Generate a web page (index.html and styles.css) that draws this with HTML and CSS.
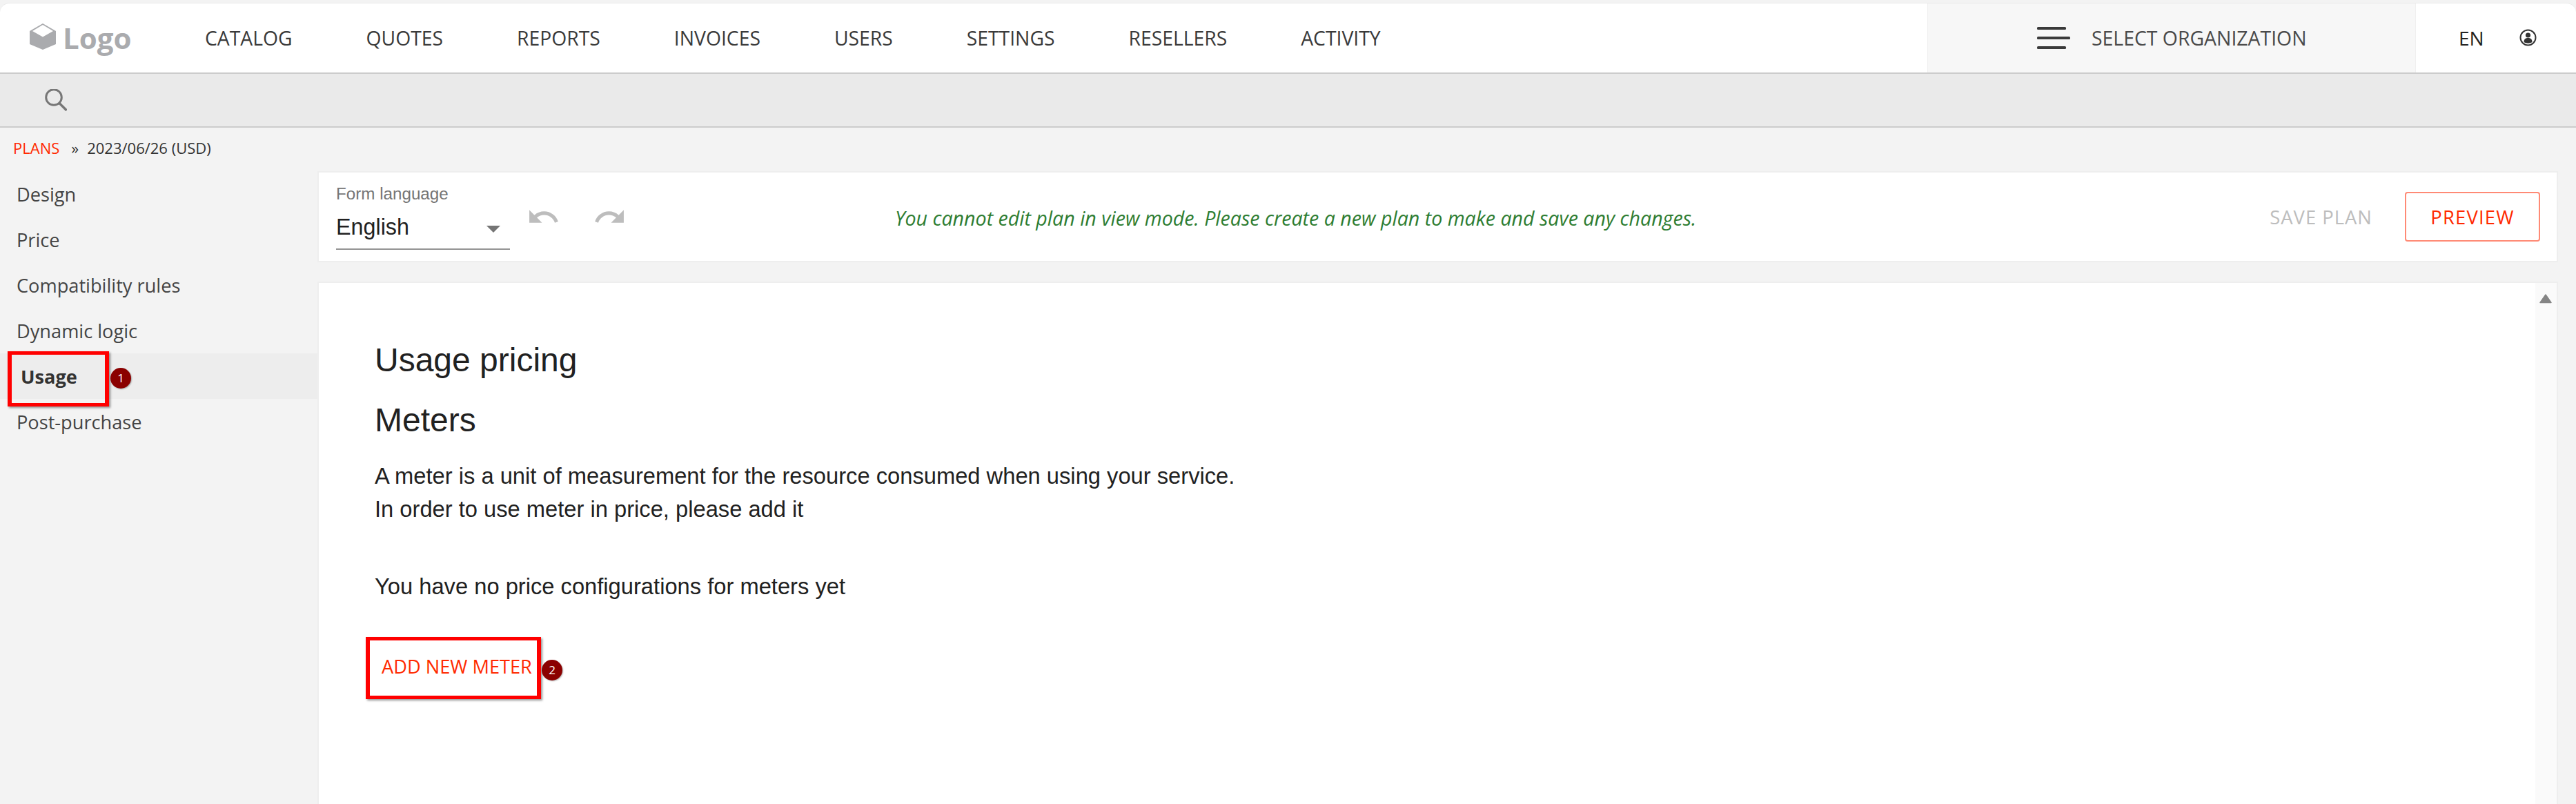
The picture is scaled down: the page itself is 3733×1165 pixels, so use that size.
FILE: index.html
```html
<!DOCTYPE html>
<html lang="en">
<head>
<meta charset="utf-8">
<title>Usage pricing</title>
<link rel="stylesheet" href="styles.css">
</head>
<body>
<header class="topbar">
  <div class="logo">
    <svg class="logo-cube" viewBox="0 0 38 38" aria-hidden="true"><path fill="#aaabae" d="M19 0 38 11v19L19 38 0 30V11z"/><path fill="#fff" d="M19 2 34 11 19 19.500 4 11z"/></svg>
    <span class="logo-text">Logo</span>
  </div>
  <nav class="main-nav">
    <a>CATALOG</a><a>QUOTES</a><a>REPORTS</a><a>INVOICES</a><a>USERS</a><a>SETTINGS</a><a>RESELLERS</a><a>ACTIVITY</a>
  </nav>
  <div class="org">
    <svg class="burger" viewBox="0 0 48 32" aria-hidden="true"><rect width="42" height="4" rx="1.500" fill="#3a3a3a"/><rect y="14" width="48" height="4" rx="1.500" fill="#3a3a3a"/><rect y="28" width="42" height="4" rx="1.500" fill="#3a3a3a"/></svg>
    <span>SELECT ORGANIZATION</span>
  </div>
  <div class="account">
    <span class="lang">EN</span>
    <svg class="user" viewBox="0 0 25 25" aria-hidden="true"><circle cx="12.500" cy="12.500" r="11" fill="none" stroke="#333" stroke-width="2"/><circle cx="12.500" cy="9" r="3.600" fill="#333"/><path fill="#333" d="M6.500 19c0-4.500 2.500-6 6-6s6 1.500 6 6c-3.500 2.200-8.500 2.200-12 0z"/></svg>
  </div>
</header>
<div class="searchbar">
  <svg class="search-icon" viewBox="0 0 32 32" aria-hidden="true"><circle cx="13" cy="12" r="11.300" fill="none" stroke="#777" stroke-width="3"/><path d="M21 20.500 31.500 31" stroke="#777" stroke-width="3.400" fill="none"/></svg>
</div>
<div class="breadcrumb"><a class="crumb-link">PLANS</a><span class="crumb-sep">»</span><span>2023/06/26 (USD)</span></div>
<main class="layout">
  <aside class="side">
    <a class="side-item">Design</a>
    <a class="side-item">Price</a>
    <a class="side-item">Compatibility rules</a>
    <a class="side-item">Dynamic logic</a>
    <a class="side-item side-active"><span>Usage</span><i class="mark mark-usage"></i><b class="badge badge-one">1</b></a>
    <a class="side-item">Post-purchase</a>
  </aside>
  <section class="work">
    <div class="card toolbar">
      <div class="lang-field">
        <label class="field-label">Form language</label>
        <div class="select"><span>English</span><i class="caret"></i></div>
      </div>
      <div class="history">
        <svg class="hist-icon" viewBox="0 0 24 24" aria-hidden="true"><path d="M12.500 8c-2.650 0-5.050.99-6.900 2.600L2 7v9h9l-3.620-3.620c1.390-1.160 3.160-1.880 5.120-1.880 3.540 0 6.550 2.310 7.600 5.500l2.370-.78C21.080 11.030 17.150 8 12.500 8z"/></svg>
        <svg class="hist-icon" viewBox="0 0 24 24" aria-hidden="true"><path d="M18.400 10.600C16.550 8.990 14.150 8 11.500 8c-4.650 0-8.580 3.030-9.960 7.220L3.900 16c1.050-3.190 4.050-5.500 7.600-5.500 1.950 0 3.730.72 5.120 1.880L13 16h9V7l-3.600 3.600z"/></svg>
      </div>
      <p class="notice">You cannot edit plan in view mode. Please create a new plan to make and save any changes.</p>
      <div class="actions">
        <span class="save">SAVE PLAN</span>
        <span class="preview">PREVIEW</span>
      </div>
    </div>
    <div class="card content">
      <div class="content-body">
        <h1 class="title title-first">Usage pricing</h1>
        <h2 class="title title-second">Meters</h2>
        <p class="copy">A meter is a unit of measurement for the resource consumed when using your service.<br>In order to use meter in price, please add it</p>
        <p class="copy copy-empty">You have no price configurations for meters yet</p>
        <a class="add-meter">ADD NEW METER<i class="mark mark-add"></i><b class="badge badge-two">2</b></a>
      </div>
      <div class="scroll-track"><svg class="scroll-up" viewBox="0 0 18 14" aria-hidden="true"><path d="M9 1 17 12.500H1z" fill="#858585" stroke="#858585" stroke-width="1.500" stroke-linejoin="round"/></svg></div>
    </div>
  </section>
</main>
</body>
</html>
```
FILE: styles.css
```css
* { box-sizing: border-box; }
html, body { margin: 0; height: 1165px; overflow: hidden; }
body { background: #f3f3f3; color: #333; font-family: "Open Sans", sans-serif; padding-top: 4px; }

.topbar { height: 103px; background: #fff; border-top: 1px solid #eaeaea; border-bottom: 2px solid #ccc; border-radius: 14px 14px 0 0; display: flex; align-items: center; }
.logo { width: 297px; padding-left: 43px; display: flex; align-items: center; gap: 10px; flex: none; }
.logo-cube { width: 38px; height: 38px; margin-top: -4px; }
.logo-text { font-size: 42px; line-height: 50px; font-weight: 700; color: #aaabae; margin-top: -1px; }
.main-nav { display: flex; gap: 107px; flex: 1; font-size: 28.3px; color: #3a3a3a; }
.org { width: 708px; align-self: stretch; background: #f7f7f7; border-left: 1px solid #efefef; border-right: 1px solid #efefef; display: flex; align-items: center; padding-left: 158px; gap: 31px; font-size: 28.4px; color: #4a4a4a; }
.burger { width: 48px; height: 32px; margin-top: -1px; }
.account { width: 232px; display: flex; align-items: center; padding-left: 62px; gap: 51px; }
.lang { font-size: 28px; color: #222; }
.user { width: 25px; height: 25px; margin-top: -2px; }

.searchbar { height: 78px; background: #eaeaea; border-bottom: 2px solid #ccc; padding: 22px 0 0 65px; }
.search-icon { display: block; width: 32px; height: 32px; }

.breadcrumb { height: 63px; padding: 11px 0 0 19px; font-size: 22px; line-height: 36px; display: flex; color: #333; }
.crumb-link { color: #ff2a00; }
.crumb-sep { margin: 0 12px 0 17px; }

.layout { display: grid; grid-template-columns: 460px 1fr; padding-right: 26px; }
.side-item { display: flex; align-items: center; height: 66px; padding-left: 24px; font-size: 27.2px; color: #444; position: relative; }
.side-active { background: #ededed; font-weight: 700; padding-left: 30px; color: #333; }

.mark { position: absolute; border: solid #f00; border-width: 5px 6px; box-shadow: 2px 2px 3px rgba(0,0,0,.4); }
.mark-usage { left: 11px; top: -3px; width: 147px; height: 80px; }
.mark-add { left: -23px; top: -25px; width: 254px; height: 90px; }
.badge { position: absolute; width: 30px; height: 30px; border-radius: 50%; background: #8b0000; color: #fff; font: 400 17px/30px "Open Sans", sans-serif; text-align: center; box-shadow: 1px 1px 2px rgba(0,0,0,.3); }
.badge-one { left: 160px; top: 21px; }
.badge-two { left: 232px; top: 8px; }

.work { display: flex; flex-direction: column; gap: 28px; }
.card { background: #fff; border: 2px solid #eee; }
.toolbar { height: 132px; display: flex; padding-left: 25px; align-items: flex-start; }
.lang-field { width: 252px; height: 112px; border-bottom: 2px solid #949494; font-family: "Liberation Sans", sans-serif; flex: none; }
.field-label { display: block; font-size: 24.2px; line-height: 28px; color: #757575; margin-top: 17px; }
.select { display: flex; justify-content: space-between; align-items: center; font-size: 32.3px; line-height: 42px; color: #212121; padding: 13px 14px 0 0; }
.caret { width: 0; height: 0; border: 10px solid transparent; border-top-color: #757575; border-bottom: 0; margin-top: 6px; }
.history { display: flex; gap: 47px; margin: 40px 0 0 24px; flex: none; }
.hist-icon { width: 49px; height: 49px; fill: #bdbdbd; display: block; }
.notice { margin: 46px 0 0 389px; font-size: 28.6px; line-height: 40px; font-style: italic; color: #2e7d32; white-space: nowrap; }
.actions { margin-left: auto; display: flex; align-items: center; gap: 47px; padding: 28px 24px 0 0; font-size: 27.4px; }
.save { color: #bdbdbd; letter-spacing: 1px; }
.preview { width: 196px; height: 72px; border: 2px solid #ff8a75; border-radius: 4px; color: #ff2a00; letter-spacing: 1.2px; display: flex; align-items: center; justify-content: center; }

.content { flex: 1; min-height: 760px; display: flex; }
.content-body { flex: 1; padding: 82px 0 0 81px; font-family: "Liberation Sans", sans-serif; color: #212121; }
.title { font-weight: 400; font-size: 48px; line-height: 60px; margin: 0; }
.title-second { margin-top: 27px; }
.copy { font-size: 32.7px; line-height: 48px; margin: 27px 0 0; }
.copy-empty { margin-top: 64px; }
.add-meter { display: inline-block; position: relative; margin: 74px 0 0 10px; font: 400 27.2px/36px "Open Sans", sans-serif; color: #ff2a00; white-space: nowrap; }
.scroll-track { width: 31px; background: #fafafa; padding: 16px 0 0 6px; flex: none; }
.scroll-up { display: block; width: 18px; height: 14px; }
```
